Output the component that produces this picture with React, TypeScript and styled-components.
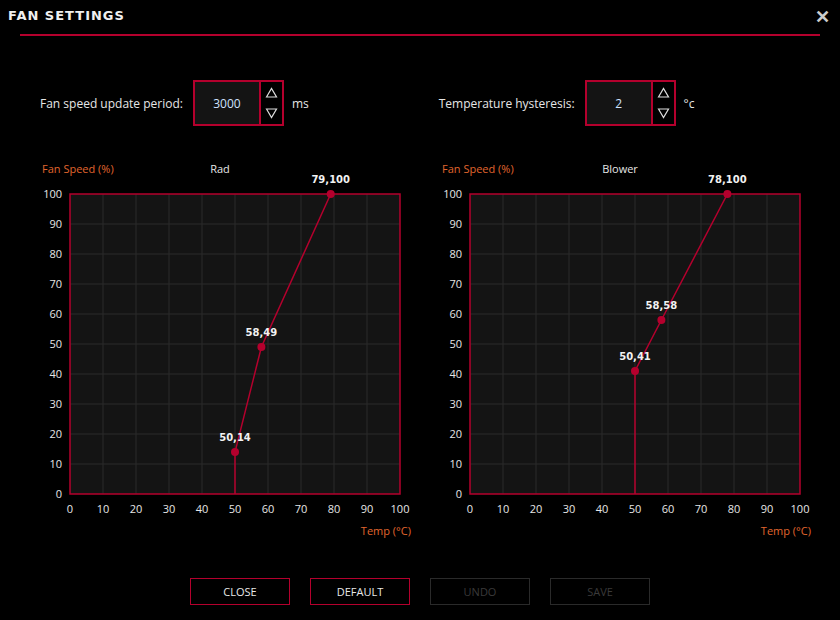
import React from "react";
import styled, { createGlobalStyle } from "styled-components";

const RED = "#b4002d";

const Global = createGlobalStyle`
  html, body { margin: 0; background: #000; }
  body { font-family: "Open Sans", "Liberation Sans", sans-serif; color: #e6e6e6; }
`;

const Window = styled.div`
  width: 840px;
  height: 620px;
  background: #000;
  position: relative;
  overflow: hidden;
`;

const TitleBar = styled.div`
  padding: 8px 0 0 8px;
  height: 26px;
  font-family: "DejaVu Sans", sans-serif;
  font-weight: bold;
  font-size: 13px;
  letter-spacing: 1px;
  color: #f0f0f0;
`;

const Close = styled.div`
  position: absolute;
  right: 10px;
  top: 4px;
  font-size: 18px;
  font-weight: bold;
  color: #ccc;
`;

const Rule = styled.div`
  margin: 0 20px;
  height: 2px;
  background: ${RED};
`;

const SettingsRow = styled.div`
  display: flex;
  margin-top: 44px;
  height: 46px;
`;

const Setting = styled.div<{ $left: number }>`
  display: flex;
  align-items: center;
  margin-left: ${(p) => p.$left}px;
  font-size: 12px;
`;

const Label = styled.span`
  margin-right: 10px;
`;

const Spin = styled.div`
  display: flex;
  border: 2px solid ${RED};
  height: 42px;
  width: 87px;
  box-sizing: content-box;
`;

const SpinValue = styled.div`
  flex: 1;
  background: #141414;
  color: #cfe3ff;
  display: flex;
  align-items: center;
  justify-content: center;
  font-size: 12px;
`;

const SpinArrows = styled.div`
  width: 21px;
  border-left: 2px solid ${RED};
  display: flex;
  flex-direction: column;
  justify-content: space-around;
  align-items: center;
`;

const Unit = styled.span`
  margin-left: 8px;
  font-size: 12px;
`;

const Charts = styled.div`
  display: flex;
  gap: 20px;
  margin: 30px 0 0 40px;
`;

const Buttons = styled.div`
  display: flex;
  justify-content: center;
  gap: 20px;
  margin-top: 37px;
`;

const Button = styled.div<{ $disabled?: boolean }>`
  width: 100px;
  height: 27px;
  box-sizing: border-box;
  border: 1px solid ${(p) => (p.$disabled ? "#2a2a2a" : RED)};
  color: ${(p) => (p.$disabled ? "#3a3a3a" : "#e8e8e8")};
  font-size: 11px;
  display: flex;
  align-items: center;
  justify-content: center;
`;

const Arrow = ({ up }: { up?: boolean }) => (
  <svg width="13" height="11" viewBox="0 0 13 11">
    <path
      d={up ? "M1.5 10 L6.5 1.5 L11.5 10 Z" : "M1.5 1 L6.5 9.5 L11.5 1 Z"}
      fill="none"
      stroke="#ddd"
      strokeWidth="1.2"
    />
  </svg>
);

type Pt = [number, number];

function Chart({ name, points }: { name: string; points: Pt[] }) {
  const L = 30, T = 38, W = 330, H = 300;
  const x = (v: number) => L + (v / 100) * W;
  const y = (v: number) => T + H - (v / 100) * H;
  const ticks = Array.from({ length: 11 }, (_, i) => i * 10);
  const path =
    `M${x(points[0][0])} ${y(0)} ` + points.map((p) => `L${x(p[0])} ${y(p[1])}`).join(" ");
  return (
    <svg width="380" height="385" style={{ display: "block" }}>
      <text x="2" y="17" fill="#e0662e" fontSize="11" fontFamily="Open Sans, sans-serif">Fan Speed (%)</text>
      <text x="180" y="17" fill="#e6e6e6" fontSize="11" textAnchor="middle" fontFamily="Open Sans, sans-serif">{name}</text>
      <rect x={L} y={T} width={W} height={H} fill="#141414" />
      {ticks.slice(1, 10).map((t) => (
        <g key={t}>
          <line x1={x(t)} x2={x(t)} y1={T} y2={T + H} stroke="#2a2a2a" />
          <line x1={L} x2={L + W} y1={y(t)} y2={y(t)} stroke="#2a2a2a" />
        </g>
      ))}
      <rect x={L} y={T} width={W} height={H} fill="none" stroke={RED} strokeWidth="1.5" />
      {ticks.map((t) => (
        <g key={t} fontSize="11" fill="#e6e6e6" fontFamily="Open Sans, sans-serif">
          <text x={22} y={y(t) + 4} textAnchor="end">{t}</text>
          <text x={x(t)} y={357} textAnchor="middle">{t}</text>
        </g>
      ))}
      <text x="371" y="379" fill="#e0662e" fontSize="11" textAnchor="end" fontFamily="Open Sans, sans-serif">Temp (°C)</text>
      <path d={path} fill="none" stroke={RED} strokeWidth="1.5" />
      {points.map((p) => (
        <g key={p[0]}>
          <circle cx={x(p[0])} cy={y(p[1])} r="4" fill={RED} />
          <text x={x(p[0])} y={y(p[1]) - 11} fill="#f2f2f2" fontSize="10" fontWeight="bold" textAnchor="middle" fontFamily="DejaVu Sans, sans-serif">
            {p[0]},{p[1]}
          </text>
        </g>
      ))}
    </svg>
  );
}

export default function App() {
  return (
    <Window>
      <Global />
      <TitleBar>FAN SETTINGS</TitleBar>
      <Close>✕</Close>
      <Rule />
      <SettingsRow>
        <Setting $left={40}>
          <Label>Fan speed update period:</Label>
          <Spin>
            <SpinValue>3000</SpinValue>
            <SpinArrows><Arrow up /><Arrow /></SpinArrows>
          </Spin>
          <Unit>ms</Unit>
        </Setting>
        <Setting $left={130}>
          <Label>Temperature hysteresis:</Label>
          <Spin>
            <SpinValue>2</SpinValue>
            <SpinArrows><Arrow up /><Arrow /></SpinArrows>
          </Spin>
          <Unit>°c</Unit>
        </Setting>
      </SettingsRow>
      <Charts>
        <Chart name="Rad" points={[[50, 14], [58, 49], [79, 100]]} />
        <Chart name="Blower" points={[[50, 41], [58, 58], [78, 100]]} />
      </Charts>
      <Buttons>
        <Button>CLOSE</Button>
        <Button>DEFAULT</Button>
        <Button $disabled>UNDO</Button>
        <Button $disabled>SAVE</Button>
      </Buttons>
    </Window>
  );
}
